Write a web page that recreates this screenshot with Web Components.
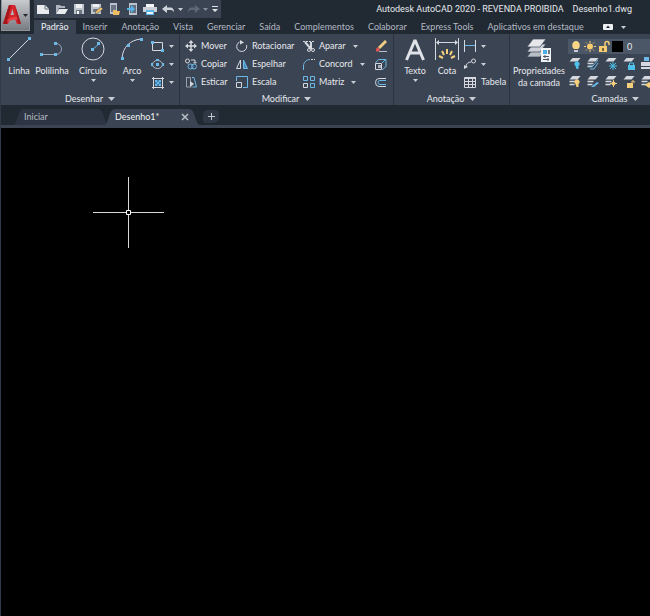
<!DOCTYPE html>
<html lang="pt-BR">
<head>
<meta charset="utf-8">
<title>Autodesk AutoCAD 2020</title>
<style>
html,body{margin:0;height:100%;background:#000}
body{font:9px/12px Lato,"Open Sans",sans-serif;color:#e6e9ed;overflow:hidden;
--chrome:#212933;--panel:#3b4453;--edge:#2b333f;--dim:#b4bac3}
</style>
</head>
<body>
<cad-app></cad-app>
<script>
const B='#6cb8e6', W='#d5d9df', Y='#f5cf7c';
const sheet=y=>`<path d="M4.5 ${y}h8l-3 3.5h-8z" fill="${W}"/>`;
const lines=`<path d="M1.5 6.5h6M1.5 9.5h5" stroke="${W}" stroke-width="1.5"/>`;
const ICONS={
 logo:[20,24,`<path d="M1 21 7 2h6l6 19h-4l-2-5H8l-2 5z" fill="#d4262a"/><path d="M8.500 12h3.500L10.500 6z" fill="#b4b6b9"/><path d="M1 21 7 2h2L5 21z" fill="#a3161b"/><path d="M5 17c4-3 8-4 11-3l1 3c-4-1-8 0-11 2z" fill="#ea4244"/><path d="M13 2l6 19-3-1z" fill="#a81a1f"/>`],
 nova:[13,12,`<path d="M0 2h8l4 4v5H0z" fill="#e9ebee"/><path d="M8 2v4h4" fill="none" stroke="#66707e"/>`],
 open:[13,12,`<path d="M1 11V2h4l1 1h4v2H4z" fill="#aeb5bf"/><path d="M4 6h9l-3 5H1z" fill="#e9ebee"/>`],
 save:[12,12,`<path d="M1 1h10v10H1z" fill="#bfc5cd"/><path d="M3 1h6v4H3z" fill="#eef0f2"/><path d="M3 7h6v4H3z" fill="#6c7683"/><path d="M4 8h2v3H4z" fill="#fff"/>`],
 saveas:[13,12,`<path d="M1 1h10v10H1z" fill="#bfc5cd"/><path d="M3 1h6v3H3z" fill="#eef0f2"/><path d="M3 6h5v3H3z" fill="#6c7683"/><path d="m5 11 1-3 5-4 2 2-5 4z" fill="#eebf69" stroke="#3b4453" stroke-width=".5"/>`],
 mobopen:[13,12,`<path d="M2 0h7v11H2z" fill="#bdc3cc"/><path d="M3 2h5v7H3z" fill="#6a7482"/><path d="M5 7h3l1 1h3l-1 4H5z" fill="#efbd62"/>`],
 mobsave:[12,12,`<path d="M3 0h8v12H3z" fill="#bdc3cc"/><path d="M4 2h6v8H4z" fill="#647080"/><path d="M1 5h4V2l4 4-4 4V7H1z" fill="#55b4ea"/>`],
 print:[14,12,`<path d="M3 1h8v3H3z" fill="#f3f4f5"/><path d="M0 4h14v5H0z" fill="#ccd1d8"/><path d="M3 7h8v5H3z" fill="#58b4e6"/><path d="M4 9h6v2H4z" fill="#f3f4f5"/>`],
 undo:[13,9,`<path d="M0 4 5 0v2.500h3c3 0 4 2 4 5-1-2-2-2.500-4-2.500H5V8z" fill="#cfd4da"/>`],
 redo:[13,9,`<path d="M13 4 8 0v2.500H5c-3 0-4 2-4 5 1-2 2-2.500 4-2.500h3V8z" fill="#5d6776"/>`],
 arrow:[5,3,`<path d="M0 0h5L2.500 3z" fill="#c9ced5"/>`],
 arrowdark:[5,3,`<path d="M0 0h5L2.500 3z" fill="#22272e"/>`],
 arrowdim:[5,3,`<path d="M0 0h5L2.500 3z" fill="#858e9b"/>`],
 arrowbig:[7,4,`<path d="M0 0h7L3.500 4z" fill="#c9ced5"/>`],
 more:[6,7,`<path d="M0 0h6v1H0zM0 3h6L3 6z" fill="#dfe2e6"/>`],
 linha:[24,24,`<path d="M2 22 22 2" stroke="${W}"/><path d="M0 21h3v3H0zM21 0h3v3h-3z" fill="${B}"/>`],
 poli:[24,24,`<path d="M2 17.500h14a5 5 0 0 0 0-11" fill="none" stroke="#99a2af"/><path d="M0 16h3v3H0zM14 16h3v3h-3zM14 5h3v3h-3z" fill="${B}"/>`],
 circ:[24,24,`<circle cx="12" cy="12" r="11" fill="none" stroke="${W}"/><path d="m12 12 6-5" stroke="${B}"/><path d="M10 11h3v3h-3zM16 5h3v3h-3z" fill="${B}"/>`],
 arco:[24,24,`<path d="M2 21C3 10 10 3 21 2" fill="none" stroke="${W}"/><path d="M1 20h3v3H1zM7 7h3v3H7zM20 1h3v3h-3z" fill="${B}"/>`],
 rect:[14,13,`<path d="M1.500 2.500h10v8h-10z" fill="none" stroke="${W}"/><path d="M0 1h3v3H0zM10 9h3v3h-3z" fill="${B}"/>`],
 elip:[14,13,`<ellipse cx="6.500" cy="6.500" rx="5" ry="4" fill="none" stroke="#b7bec8"/><path d="M5 5h3v3H5zM0 5h2v3H0zM11 5h2v3h-2zM5 1h3v2H5z" fill="${B}"/>`],
 hach:[14,13,`<path d="M2.500 1v12M11.500 1v12M1 2.500h12M1 11.500h12" stroke="${W}"/><path d="M4 4h6v6H4z" fill="#3f80b0"/><path d="M4 4h2v2H4zM8 4h2v2H8zM6 6h2v2H6zM4 8h2v2H4zM8 8h2v2H8z" fill="${B}"/>`],
 mover:[12,12,`<path d="M6 1v10M1 6h10" stroke="${W}" stroke-width="1.500"/><path d="m6 0 2.500 3h-5zM6 12l2.500-3h-5zM0 6l3-2.500v5zM12 6 9 3.500v5z" fill="${W}"/>`],
 copiar:[12,12,`<g fill="none"><circle cx="2.500" cy="3" r="2" stroke="${W}"/><path d="M6 2h4v3M8.500 4 10 5.500 11.500 4" stroke="${W}"/><circle cx="5.500" cy="8.500" r="2.500" stroke="${B}"/><circle cx="9" cy="8.500" r="2.500" stroke="${B}"/></g>`],
 esticar:[12,12,`<path d="M1.500 1v10h5M1.500 1.500h4v5" fill="none" stroke="#98a2ae"/><path d="M7 1.500h2l2.500 9.500h-4" fill="none" stroke="${B}"/><path d="M5 5v6l4-3z" fill="${W}"/>`],
 rotac:[12,12,`<path d="M3.500 2A5 5 0 1 0 10.500 5" fill="none" stroke="${W}"/><path d="M4 0l4 2.500-4 2z" fill="${W}"/>`],
 espel:[12,12,`<path d="M4.500 2v8.500h-4z" fill="none" stroke="${W}"/><path d="M7.500 2v8.500h4z" fill="#4d8db8" stroke="${B}"/>`],
 escala:[12,12,`<path d="M.5 5V.5h11v11H7" fill="none" stroke="${B}"/><path d="M.5 6.500h5v5h-5z" fill="none" stroke="${W}"/>`],
 aparar:[12,12,`<path d="M0 1.500h12" stroke="${W}" stroke-dasharray="2 1"/><path d="m2 2 6 7M8 2v7" stroke="${W}" stroke-width="2"/><circle cx="10" cy="10" r="1.500" fill="none" stroke="${W}"/><circle cx="6" cy="10" r="1.500" fill="none" stroke="${W}"/>`],
 concord:[12,12,`<path d="M.5 12V8C.5 4 4 1.500 7 1.500" fill="none" stroke="${B}"/><path d="M8 1.500h4" stroke="${W}" stroke-dasharray="2 1"/>`],
 matriz:[12,12,`<path d="M.5 7.500h4v4h-4z" fill="none" stroke="${W}"/><path d="M.5 .5h4v4h-4zM7.500 .5h4v4h-4zM7.500 7.500h4v4h-4z" fill="none" stroke="${B}"/>`],
 apagar:[13,13,`<path d="m4 7 7-7 2 2-7 7z" fill="#f2ce85"/><path d="m2 9 2-2 2 3-2 1.500H2z" fill="#e55455"/><path d="M5 11.500h8" stroke="#b9c0c9"/>`],
 explod:[13,13,`<path d="M1.500 5.500h6v6h-6z" fill="none" stroke="${W}"/><path d="m1.500 5 3-3.500h7.500v7l-4 3.500M8 5l4-4" fill="none" stroke="${B}"/><path d="M4 7h3v3H4z" fill="#a7afba"/>`],
 desloc:[13,13,`<path d="M12 2.500H5a3.500 4 0 0 0 0 8h7" fill="none" stroke="${W}"/><path d="M12 4.500H6a2 2 0 0 0 0 4h6" fill="none" stroke="${B}"/>`],
 texto:[24,24,`<path d="M3.500 23 12 3l8.500 20M7 16h10" fill="none" stroke="#dfe2e6" stroke-width="3" stroke-linejoin="bevel"/>`],
 cota:[24,24,`<path d="M.5 1v22M23.500 1v22M2 5.500h20" stroke="${W}"/><path d="m1 5.500 3-2.500v5zM23 5.500 20 3v5z" fill="${W}"/><path d="M12 12v5M7 14l2 4M17 14l-2 4M4 19l4 2M20 19l-4 2" stroke="${Y}" stroke-width="2"/>`],
 linear:[13,12,`<path d="M.5 0v12M11.500 0v12" stroke="${W}"/><path d="M1 5.500h10" stroke="${B}"/>`],
 cham:[13,12,`<circle cx="9.500" cy="3" r="2" fill="none" stroke="${W}"/><path d="M7 4C4 4 2 6 2 9" fill="none" stroke="${W}"/><path d="M0 11V7l4 2z" fill="${W}"/>`],
 tabela:[13,12,`<path d="M.5 1.500h11v10H.5zM.5 5.500h11M.5 8.500h11M4.500 3v8M8.500 3v8" fill="none" stroke="${W}"/><path d="M1 1h11v2H1z" fill="${W}"/>`],
 props:[26,26,`<g stroke="#3b4453" stroke-width=".7"><path d="m7 12h13l-6 8H1z" fill="#b8bec6"/><path d="M7 7h13l-6 8H1z" fill="#cdd1d7"/><path d="M7 2h13l-6 8H1z" fill="#e5e7ea"/></g><path d="M15 11h10v14H15z" fill="#f1f2f4"/><path d="M17 13h4v4h-4z" fill="#4aaee8"/><path d="M22 13h2v4h-2z" fill="#6c7785"/><path d="M17 19.500h6M17 22.500h6M19 18v3M22 21v3" stroke="#4c5664"/>`],
 bulb:[12,13,`<path d="M4 9C1 7 2 1 6 1s5 6 2 8z" fill="#fad785"/><path d="M4 10h4v2H4z" fill="#c8ccd2"/>`],
 sun:[12,13,`<circle cx="6" cy="6.500" r="3" fill="#f7cb70"/><path d="M6 1v2M6 10v2M0 6.500h2M10 6.500h2M2 2.500l1 1M10 2.500l-1 1M2 10.500l1-1M10 10.500l-1-1" stroke="#f7cb70"/>`],
 unlock:[12,13,`<path d="M7 6V3.500a2 2 0 0 1 4 0V5" fill="none" stroke="#f7cb70" stroke-width="1.500"/><path d="M1 6h8v6H1z" fill="#f7cb70"/><path d="M4 8h2v3H4z" fill="#73613b"/>`],
 black:[11,11,`<path d="M0 0h11v11H0z" fill="#000"/>`],
 l1:[13,13,sheet(1)+`<path d="M7.500 9a2.500 2.500 0 1 1 3 0v3h-2z" fill="#4dc0ec"/>`],
 l2:[13,13,sheet(1)+lines+`<path d="M3 9h4l5-6M4 12h4l4-6" fill="none" stroke="${B}"/>`],
 l3:[13,13,sheet(1)+`<path d="M9 5v8M5 9h8M6 6l6 6M12 6l-6 6" stroke="#4dc0ec"/>`],
 l4:[13,13,sheet(1)+`<path d="M6 8h7v5H6z" fill="#4dc0ec"/><path d="M7.500 8V6h4v2" fill="none" stroke="#4dc0ec"/>`],
 l5:[13,13,`<path d="M4 0h5v4H4z" fill="${B}"/><path d="M1 5h12v4H1zM1 10h12v2H1z" fill="${W}"/>`],
 m1:[13,13,sheet(1)+lines+`<path d="M7.500 9a2.500 2.500 0 1 1 3 0v3h-2z" fill="${Y}"/>`],
 m2:[13,13,sheet(1)+lines+`<path d="m5 12 6-5 2 1-5 4z" fill="${B}"/>`],
 m3:[13,13,sheet(1)+lines+`<circle cx="9.500" cy="8.500" r="2" fill="${Y}"/><path d="M9.500 5v7M6 8.500h7" stroke="${Y}"/>`],
 m4:[13,13,sheet(1)+`<path d="M5 8h6v5H5z" fill="${Y}"/><path d="M10 8V6h2v2" fill="none" stroke="${Y}"/>`],
 m5:[13,13,sheet(1)+lines+`<path d="m5 10 4-3 4 3-4 3z" fill="${Y}"/>`],
 mini:[10,6,`<rect width="10" height="6" rx="1" fill="#eceef0"/><path d="M3 4h4L5 1.500z" fill="#212933"/>`],
 close:[8,8,`<path d="m1 1 6 6M7 1 1 7" stroke="#b8bec7" stroke-width="1.500"/>`],
 plus:[7,7,`<path d="M3.500 0v7M0 3.500h7" stroke="#c3c8cf"/>`]
};
const define=(name,css,html)=>customElements.define(name,class extends HTMLElement{
 constructor(){super();this.attachShadow({mode:'open'})}
 connectedCallback(){
  this.shadowRoot.innerHTML=`<style>*{box-sizing:border-box}button,select{font:inherit;color:inherit;background:none;border:0;padding:0;margin:0}${css}</style>`+(typeof html==='function'?html(this):html)}
});
const ic=n=>`<cad-icon name="${n}"></cad-icon>`;
define('cad-icon',`:host{display:block;flex:none}svg{display:block}`,el=>{
 const [w,h,s]=ICONS[el.getAttribute('name')];
 return `<svg width="${w}" height="${h}" viewBox="0 0 ${w} ${h}" aria-hidden="true">${s}</svg>`});
define('cad-large',`:host{display:block;flex:none}button{display:flex;flex-direction:column;align-items:center;width:100%;white-space:nowrap}
 .i{height:28px}.l{display:block}.a{padding-top:2px}`,
 el=>`<button><span class="i">${ic(el.getAttribute('icon'))}</span><span class="l"><slot></slot></span>${el.hasAttribute('menu')?`<span class="a">${ic('arrow')}</span>`:''}</button>`);
define('cad-small',`:host{display:block}button{display:flex;align-items:center;height:18px;gap:4px;white-space:nowrap}
 .a{padding-left:var(--menu-gap,3px)}:host([label]){--menu-gap:0}`,
 el=>`<button aria-label="${el.getAttribute('label')||el.textContent}">${ic(el.getAttribute('icon'))}${el.textContent?'<slot></slot>':''}${el.hasAttribute('menu')?`<span class="a">${ic('arrow')}</span>`:''}</button>`);
define('cad-panel',`:host{display:flex;flex-direction:column;flex:none;border-right:1px solid var(--edge)}
 .c{display:flex;height:56px;padding:3px 0 0 4px}.t{display:flex;justify-content:center;align-items:center;gap:5px;height:15px;width:100%;padding-top:2px}`,
 el=>`<div class="c"><slot></slot></div><button class="t">${el.getAttribute('title-text')}${ic('arrowbig')}</button>`);
define('cad-quick',`:host{display:flex;align-items:center;height:18px;background:var(--panel);padding:0 3px;gap:5px}button{display:flex;flex:none}.drop{margin:0 -1px 0 -2px}`,
 ['nova','open','save','saveas','mobopen','mobsave','print','undo','arrow','redo','arrowdim','more'].map((n,i)=>`<button ${n.startsWith('arrow')?'class="drop" ':''}aria-label="${['Novo','Abrir','Salvar','Salvar como','Abrir móvel','Salvar móvel','Plotar','Desfazer','Opções de desfazer','Refazer','Opções de refazer','Personalizar'][i]}">${ic(n)}</button>`).join(''));
define('cad-tabs',`:host{display:flex;height:14px;color:var(--dim)}button{padding:0 7px;height:14px;line-height:14px;white-space:nowrap}
 .on{background:var(--panel);color:#f0f2f4}.m{display:flex;align-items:center;gap:8px;padding-left:12px}`,
 ['Padrão','Inserir','Anotação','Vista','Gerenciar','Saída','Complementos','Colaborar','Express Tools','Aplicativos em destaque'].map((t,i)=>`<button class="${i?'':'on'}">${t}</button>`).join('')+`<button class="m" aria-label="Minimizar">${ic('mini')}${ic('arrow')}</button>`);
define('cad-doc',`:host{display:flex;height:16px;--c:#2d3542;color:var(--dim)}:host([active]){--c:var(--panel);color:#f0f2f4;margin-left:-5px}
 svg{flex:none;fill:var(--c)}.b{display:flex;flex:1;align-items:center;background:var(--c)}.n{flex:1;text-align:left;height:16px}.x{display:flex}`,
 el=>`<svg width="11" height="16" aria-hidden="true"><path d="M0 16C5 16 4 0 11 0v16z"/></svg><div class="b"><button class="n"><slot></slot></button>${el.hasAttribute('active')?`<button class="x" aria-label="Fechar">${ic('close')}</button>`:''}</div><svg width="11" height="16" aria-hidden="true"><path d="M0 0c7 0 6 16 11 16H0z"/></svg>`);
define('cad-docs',`:host{display:flex;align-items:flex-end;height:20px;background:var(--chrome);padding-left:12px}
 cad-doc{width:96px}.p{width:16px;height:13px;margin:0 0 2px 3px;background:#2f3845;border-radius:5px 4px 6px 3px;display:flex;align-items:center;justify-content:center}`,
 `<cad-doc>Iniciar</cad-doc><cad-doc active>Desenho1*</cad-doc><button class="p" aria-label="Novo desenho">${ic('plus')}</button>`);
define('cad-layer',`:host{display:flex;align-items:center;height:15px;gap:2px;background:#4b5667;padding-left:2px}select{appearance:none;flex:1;padding-left:2px;outline:0}`,
 `${ic('bulb')}${ic('sun')}${ic('unlock')}${ic('black')}<select aria-label="Camada"><option>0</option></select>`);
define('cad-ribbon',`:host{display:flex;background:var(--panel);height:71px;overflow:hidden}
 .d{width:179px}.m{width:214px}.n{width:116px}.k{width:212px}
 .g{display:grid;grid-auto-rows:18px;align-content:start}
 .d .g{margin-left:2px}.mg{grid-template-columns:51px 67px 71px 14px;margin-left:1px}.ng{margin-left:2px}
 .w28{width:28px}.w30{width:30px}.w34{width:34px}.w38{width:38px}.w44{width:44px}.w50{width:50px}
 .layers{flex:1;padding:2px 0 0 4px}.kl{display:grid;grid-template-columns:repeat(5,18px);grid-auto-rows:18px}`,
`<cad-panel class="d" title-text="Desenhar">
<cad-large icon="linha" class="w28">Linha</cad-large><cad-large icon="poli" class="w38">Polilinha</cad-large><cad-large icon="circ" menu class="w44">Círculo</cad-large><cad-large icon="arco" menu class="w34">Arco</cad-large>
<div class="g"><cad-small icon="rect" menu label="Retângulo"></cad-small><cad-small icon="elip" menu label="Elipse"></cad-small><cad-small icon="hach" menu label="Hachura"></cad-small></div></cad-panel>
<cad-panel class="m" title-text="Modificar"><div class="g mg">
<cad-small icon="mover">Mover</cad-small><cad-small icon="rotac">Rotacionar</cad-small><cad-small icon="aparar" menu>Aparar</cad-small><cad-small icon="apagar" label="Apagar"></cad-small>
<cad-small icon="copiar">Copiar</cad-small><cad-small icon="espel">Espelhar</cad-small><cad-small icon="concord" menu>Concord</cad-small><cad-small icon="explod" label="Explodir"></cad-small>
<cad-small icon="esticar">Esticar</cad-small><cad-small icon="escala">Escala</cad-small><cad-small icon="matriz" menu>Matriz</cad-small><cad-small icon="desloc" label="Deslocamento"></cad-small></div></cad-panel>
<cad-panel class="n" title-text="Anotação"><cad-large icon="texto" menu class="w34">Texto</cad-large><cad-large icon="cota" class="w30">Cota</cad-large>
<div class="g ng"><cad-small icon="linear" menu label="Linear"></cad-small><cad-small icon="cham" menu label="Chamada"></cad-small><cad-small icon="tabela">Tabela</cad-small></div></cad-panel>
<cad-panel class="k" title-text="Camadas"><cad-large icon="props" class="w50">Propriedades<br>da camada</cad-large>
<div class="layers"><cad-layer></cad-layer><div class="kl">${['l1','l2','l3','l4','l5','m1','m2','m3','m4','m5'].map(n=>`<cad-small icon="${n}" label="Camada"></cad-small>`).join('')}</div></div></cad-panel>`);
define('cad-canvas',`:host{display:block;flex:1;background:#000;border-left:1px solid #303a49;position:relative;overflow:hidden}svg{position:absolute;left:92px;top:49px}`,
 `<svg width="71" height="71" aria-hidden="true"><path d="M35.500 0v33M35.500 38v33M0 35.500h33M38 35.500h33" stroke="#d8d8d8"/><path d="M33.500 33.500h4v4h-4z" fill="none" stroke="#fff"/></svg>`);
define('cad-app',`:host{display:flex;flex-direction:column;height:100vh;overflow:hidden}
 .h{display:flex;background:var(--chrome);height:34px;padding-left:1px}
 .logo{display:flex;align-items:center;gap:1px;width:29px;height:31px;flex:none;background:linear-gradient(#c9cbce,#777c83);border:1px solid #8f949b;border-top:0}
 .r{flex:1;display:flex;flex-direction:column;justify-content:space-between;min-width:0;padding-left:4px}
 .t{display:flex}.q{margin-right:auto}h1{font:9px/18px Roboto,sans-serif;margin:0;white-space:pre;padding-right:18px}
 .rule{height:3px;background:var(--panel)}cad-ribbon,cad-docs,.rule{border-left:1px solid #303a49}`,
`<header class="h"><button class="logo" aria-label="Menu do aplicativo">${ic('logo')}${ic('arrowdark')}</button>
<div class="r"><div class="t"><cad-quick class="q"></cad-quick><h1>Autodesk AutoCAD 2020 - REVENDA PROIBIDA    Desenho1.dwg</h1></div><cad-tabs></cad-tabs></div></header>
<cad-ribbon></cad-ribbon><cad-docs></cad-docs><div class="rule"></div><cad-canvas></cad-canvas>`);
</script>
</body>
</html>
